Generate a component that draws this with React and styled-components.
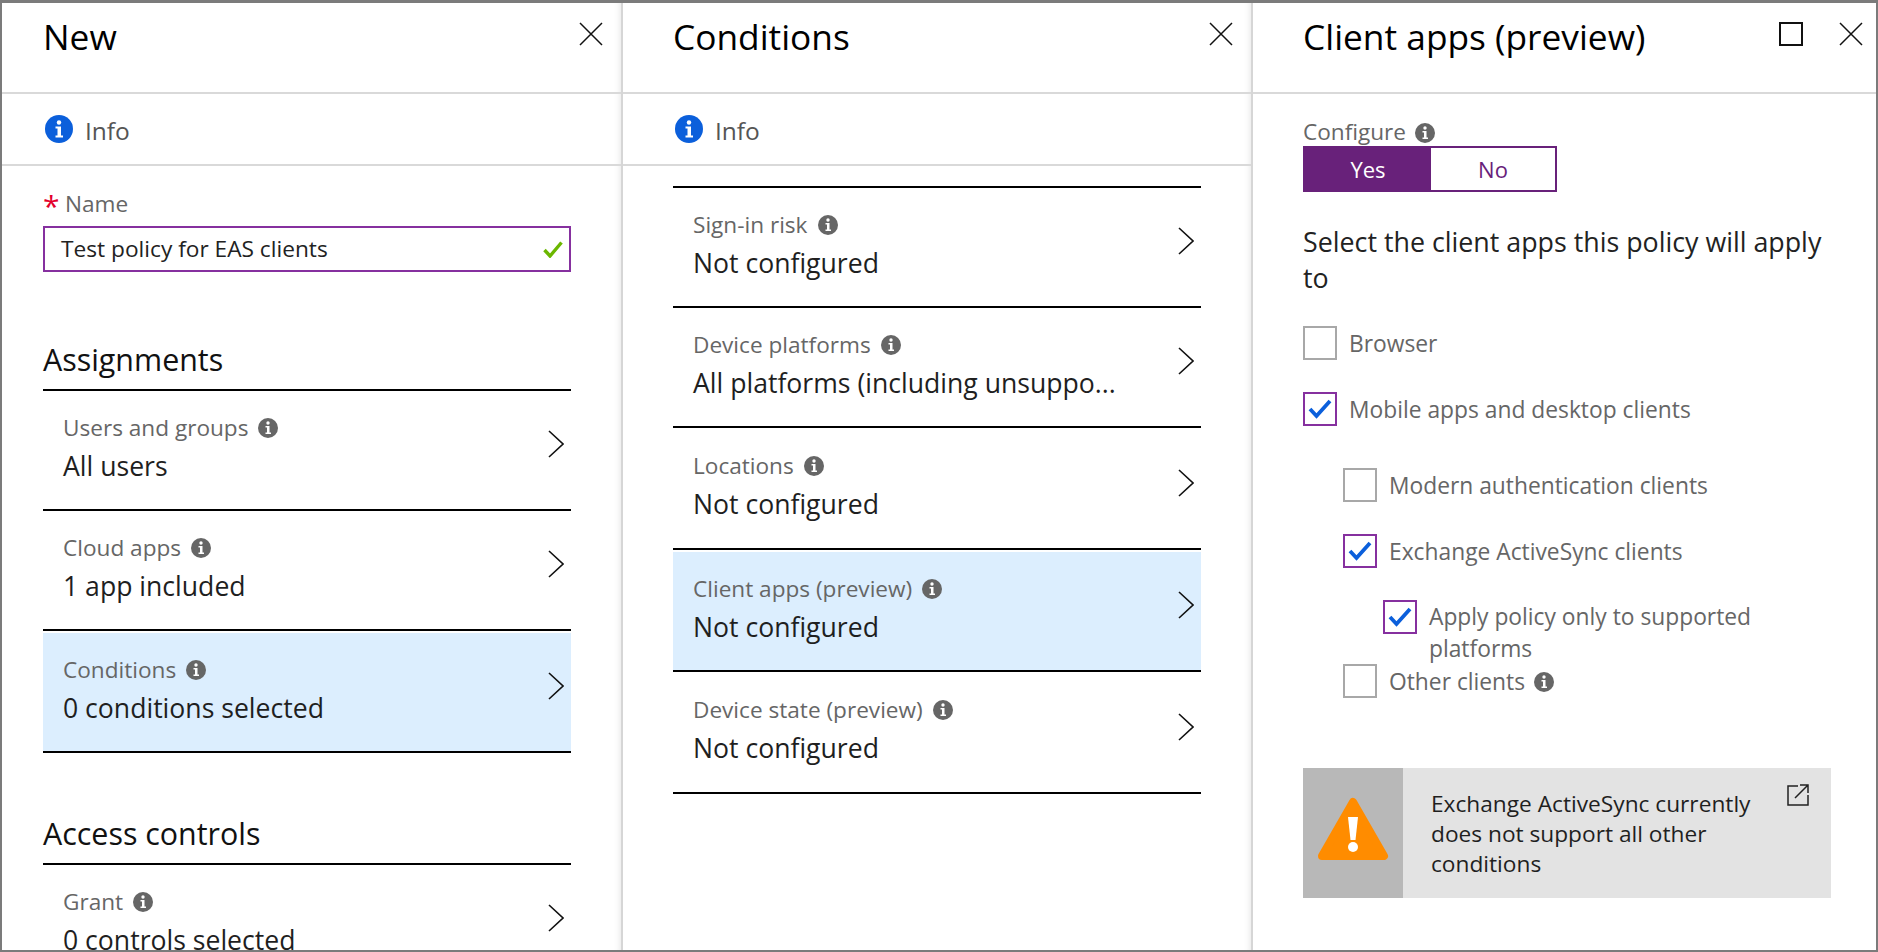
import React from 'react';
import styled, { createGlobalStyle } from 'styled-components';

const GlobalStyle = createGlobalStyle`
	html, body {
		margin: 0;
		padding: 0;
		background: #fff;
		overflow: hidden;
	}
	* {
		box-sizing: border-box;
	}
`;

const Frame = styled.div`
	width: 1878px;
	height: 952px;
	display: flex;
	overflow: hidden;
	background: #fff;
	border: solid #7b7b7b;
	border-width: 3px 2px 2px 2px;
	font-family: 'Open Sans', 'Noto Sans', sans-serif;
	color: #1f1f1f;
`;

const Blade = styled.section`
	width: ${(props) => props.$width}px;
	flex: none;
	height: 100%;
	overflow: hidden;
	border-right: ${(props) => (props.$last ? 'none' : '2px solid #d6d6d6')};
	box-shadow: ${(props) => (props.$last ? 'none' : 'inset -7px 0 6px -6px #e6e6e6')};
`;

const BladeHeader = styled.header`
	height: 91px;
	padding: 11px 18px 0 ${(props) => props.$pad}px;
	display: flex;
	justify-content: space-between;
	align-items: flex-start;
	border-bottom: 2px solid #d9d9d9;
`;

const Title = styled.h1`
	margin: 0;
	font-size: 35.3px;
	line-height: 44px;
	font-weight: 400;
	color: #000;
`;

const HeaderActions = styled.div`
	display: flex;
	align-items: center;
	gap: 36px;
	padding-top: 8px;
	margin-right: ${(props) => props.$right || 0}px;
`;

const InfoBar = styled.div`
	height: 72px;
	padding-left: ${(props) => props.$pad}px;
	display: flex;
	align-items: center;
	gap: 12px;
	border-bottom: 2px solid #d9d9d9;
	font-size: 24.5px;
	color: #555;
`;

const InfoText = styled.span`
	padding-top: 2px;
`;

const Body = styled.div`
	padding: ${(props) => props.$top}px 0 0 ${(props) => props.$pad}px;
	width: ${(props) => props.$pad + 528}px;
`;

const FieldLabel = styled.div`
	display: flex;
	align-items: center;
	gap: 9px;
	height: 28px;
	padding-bottom: 2px;
	font-size: 22.6px;
	color: #666;
	svg {
		margin-top: 4px;
	}
`;

const Star = styled.span`
	width: 13px;
	color: #e3002b;
	font-size: 30px;
	line-height: 28px;
	height: 22px;
	overflow: visible;
`;

const NameInput = styled.div`
	margin-top: 8px;
	height: 46px;
	padding: 0 6px 2px 16px;
	display: flex;
	align-items: center;
	justify-content: space-between;
	border: 2px solid #86309f;
	font-size: 22.7px;
	color: #222;
	svg {
		margin-top: 2px;
	}
`;

const SectionTitle = styled.h2`
	margin: ${(props) => props.$top}px 0 0;
	height: 49px;
	font-size: 30.4px;
	line-height: 40px;
	font-weight: 400;
	color: #111;
`;

const RowList = styled.div`
	border-top: 2px solid #000;
`;

const RowBox = styled.div`
	position: relative;
	height: ${(props) => (props.$tall ? 122 : 120)}px;
	padding: ${(props) => (props.$tall && !props.$selected ? 23 : 22)}px 0 0 20px;
	border-bottom: 2px solid #000;
	background: ${(props) => (props.$selected ? '#dceefe' : 'transparent')};
	background-clip: padding-box;
	border-top: ${(props) => (props.$selected ? '2px solid #fff' : 'none')};
`;

const RowLabel = styled.div`
	display: flex;
	align-items: center;
	gap: 10px;
	height: 28px;
	font-size: 22.6px;
	color: #666;
	svg {
		margin-top: 2px;
	}
`;

const RowValue = styled.div`
	margin-top: 8px;
	height: 34px;
	font-size: 26.6px;
	line-height: 34px;
	white-space: nowrap;
	color: #1f1f1f;
`;

const ChevronSlot = styled.span`
	position: absolute;
	right: 7px;
	top: ${(props) => (props.$tall ? 41 : 39)}px;
	display: flex;
`;

const Toggle = styled.div`
	width: 254px;
	height: 46px;
	display: flex;
	border: 2px solid #68217a;
	font-size: 22px;
`;

const ToggleOption = styled.div`
	flex: ${(props) => (props.$on ? '0 0 126px' : 1)};
	display: flex;
	align-items: center;
	justify-content: center;
	background: ${(props) => (props.$on ? '#68217a' : '#fff')};
	color: ${(props) => (props.$on ? '#fff' : '#68217a')};
`;

const Lead = styled.p`
	margin: 32px 0 0;
	font-size: 26.8px;
	line-height: 36px;
	color: #222;
`;

const CheckRow = styled.div`
	display: flex;
	align-items: flex-start;
	gap: 12px;
	margin: ${(props) => props.$top}px 0 0 ${(props) => props.$indent || 0}px;
	font-size: 22.8px;
	line-height: 32px;
	color: #666;
`;

const Box = styled.span`
	flex: none;
	width: 34px;
	height: 34px;
	display: flex;
	align-items: center;
	justify-content: center;
	border: 2px solid ${(props) => (props.$checked ? '#86309f' : '#a8a8a8')};
`;

const CheckLabel = styled.span`
	display: inline-flex;
	align-items: center;
	gap: 9px;
	min-height: 34px;
	padding-top: 1px;
`;

const Notice = styled.div`
	position: relative;
	margin-top: 70px;
	width: 528px;
	height: 130px;
	display: flex;
	background: #e3e3e3;
`;

const NoticeIcon = styled.div`
	flex: 0 0 100px;
	display: flex;
	align-items: center;
	justify-content: center;
	padding-bottom: 8px;
	background: #b8b8b8;
`;

const NoticeText = styled.div`
	padding: 21px 0 0 28px;
	width: 390px;
	font-size: 22.7px;
	line-height: 30px;
	color: #1f1f1f;
`;

const NoticeLink = styled.span`
	position: absolute;
	top: 16px;
	right: 22px;
	display: flex;
`;

const CloseIcon = () => (
	<svg width="24" height="24" viewBox="0 0 24 24" fill="none" stroke="#111" strokeWidth="1.5">
		<path d="M1 1 L23 23 M23 1 L1 23" />
	</svg>
);

const MaxIcon = () => (
	<svg width="24" height="24" viewBox="0 0 24 24" fill="none" stroke="#111" strokeWidth="2">
		<rect x="1" y="1" width="22" height="22" />
	</svg>
);

const InfoBlue = () => (
	<svg width="28" height="28" viewBox="0 0 28 28">
		<circle cx="14" cy="14" r="14" fill="#0b5fdb" />
		<circle cx="14" cy="7.5" r="2.2" fill="#fff" />
		<path d="M10.5 11.5 H16 V20.5 H18 V22.5 H10.5 V20.5 H12.5 V13.5 H10.5 Z" fill="#fff" />
	</svg>
);

const InfoGrey = () => (
	<svg width="20" height="20" viewBox="0 0 20 20">
		<circle cx="10" cy="10" r="10" fill="#666" />
		<circle cx="10" cy="5" r="1.7" fill="#fff" />
		<path d="M7.5 8 H11.5 V14.5 H13 V16 H7.5 V14.5 H9 V9.5 H7.5 Z" fill="#fff" />
	</svg>
);

const Chevron = () => (
	<svg width="16" height="28" viewBox="0 0 16 28" fill="none" stroke="#111" strokeWidth="1.6">
		<path d="M1 1 L15 14 L1 27" />
	</svg>
);

const GreenCheck = () => (
	<svg width="20" height="17" viewBox="0 0 20 17" fill="none" stroke="#6bb700" strokeWidth="3.4">
		<path d="M1.5 9 L7 15 L18.5 1.5" />
	</svg>
);

const BlueCheck = () => (
	<svg width="24" height="20" viewBox="0 0 24 20" fill="none" stroke="#0b5fdb" strokeWidth="3.8">
		<path d="M2 10 L8.5 17 L22 2" />
	</svg>
);

const Warning = () => (
	<svg width="72" height="64" viewBox="0 0 72 64">
		<path d="M36 5 L67 59 H5 Z" fill="#ff8c00" stroke="#ff8c00" strokeWidth="8" strokeLinejoin="round" />
		<path d="M31 20 H41 L38.5 43 H33.5 Z" fill="#fff" />
		<circle cx="36" cy="50" r="5" fill="#fff" />
	</svg>
);

const External = () => (
	<svg width="22" height="22" viewBox="0 0 22 22" fill="none" stroke="#222" strokeWidth="1.5">
		<path d="M11 2 H1 V21 H21 V11" />
		<path d="M8 14 L20.5 1.5 M13 1 H21 V9" />
	</svg>
);

const Row = ({ label, value, selected, tall }) => (
	<RowBox $selected={selected} $tall={tall}>
		<RowLabel>
			{label}
			<InfoGrey />
		</RowLabel>
		<RowValue>{value}</RowValue>
		<ChevronSlot $tall={tall && !selected}>
			<Chevron />
		</ChevronSlot>
	</RowBox>
);

const Check = ({ checked, indent, top, children }) => (
	<CheckRow $indent={indent} $top={top}>
		<Box $checked={checked}>{checked && <BlueCheck />}</Box>
		<CheckLabel>{children}</CheckLabel>
	</CheckRow>
);

const App = () => (
	<Frame>
		<GlobalStyle />
		<Blade $width={621}>
			<BladeHeader $pad={41}>
				<Title>New</Title>
				<HeaderActions>
					<CloseIcon />
				</HeaderActions>
			</BladeHeader>
			<InfoBar $pad={43}>
				<InfoBlue />
				<InfoText>Info</InfoText>
			</InfoBar>
			<Body $top={24} $pad={41}>
				<FieldLabel>
					<Star>*</Star>
					Name
				</FieldLabel>
				<NameInput>
					Test policy for EAS clients
					<GreenCheck />
				</NameInput>
				<SectionTitle $top={68}>Assignments</SectionTitle>
				<RowList>
					<Row label="Users and groups" value="All users" />
					<Row label="Cloud apps" value="1 app included" />
					<Row label="Conditions" value="0 conditions selected" selected tall />
				</RowList>
				<SectionTitle $top={61}>Access controls</SectionTitle>
				<RowList>
					<Row label="Grant" value="0 controls selected" />
				</RowList>
			</Body>
		</Blade>
		<Blade $width={630}>
			<BladeHeader $pad={50}>
				<Title>Conditions</Title>
				<HeaderActions>
					<CloseIcon />
				</HeaderActions>
			</BladeHeader>
			<InfoBar $pad={52}>
				<InfoBlue />
				<InfoText>Info</InfoText>
			</InfoBar>
			<Body $top={20} $pad={50}>
				<RowList>
					<Row label="Sign-in risk" value="Not configured" />
					<Row label="Device platforms" value="All platforms (including unsuppo..." />
					<Row label="Locations" value="Not configured" tall />
					<Row label="Client apps (preview)" value="Not configured" selected tall />
					<Row label="Device state (preview)" value="Not configured" tall />
				</RowList>
			</Body>
		</Blade>
		<Blade $width={623} $last>
			<BladeHeader $pad={50}>
				<Title>Client apps (preview)</Title>
				<HeaderActions $right={-5}>
					<MaxIcon />
					<CloseIcon />
				</HeaderActions>
			</BladeHeader>
			<Body $top={24} $pad={50}>
				<FieldLabel>
					Configure
					<InfoGrey />
				</FieldLabel>
				<Toggle>
					<ToggleOption $on>Yes</ToggleOption>
					<ToggleOption>No</ToggleOption>
				</Toggle>
				<Lead>Select the client apps this policy will apply to</Lead>
				<Check top={30}>Browser</Check>
				<Check checked top={32}>Mobile apps and desktop clients</Check>
				<Check indent={40} top={42}>Modern authentication clients</Check>
				<Check checked indent={40} top={32}>Exchange ActiveSync clients</Check>
				<Check checked indent={80} top={32}>Apply policy only to supported platforms</Check>
				<Check indent={40} top={-1}>
					Other clients
					<InfoGrey />
				</Check>
				<Notice>
					<NoticeIcon>
						<Warning />
					</NoticeIcon>
					<NoticeText>Exchange ActiveSync currently does not support all other conditions</NoticeText>
					<NoticeLink>
						<External />
					</NoticeLink>
				</Notice>
			</Body>
		</Blade>
	</Frame>
);

export default App;
